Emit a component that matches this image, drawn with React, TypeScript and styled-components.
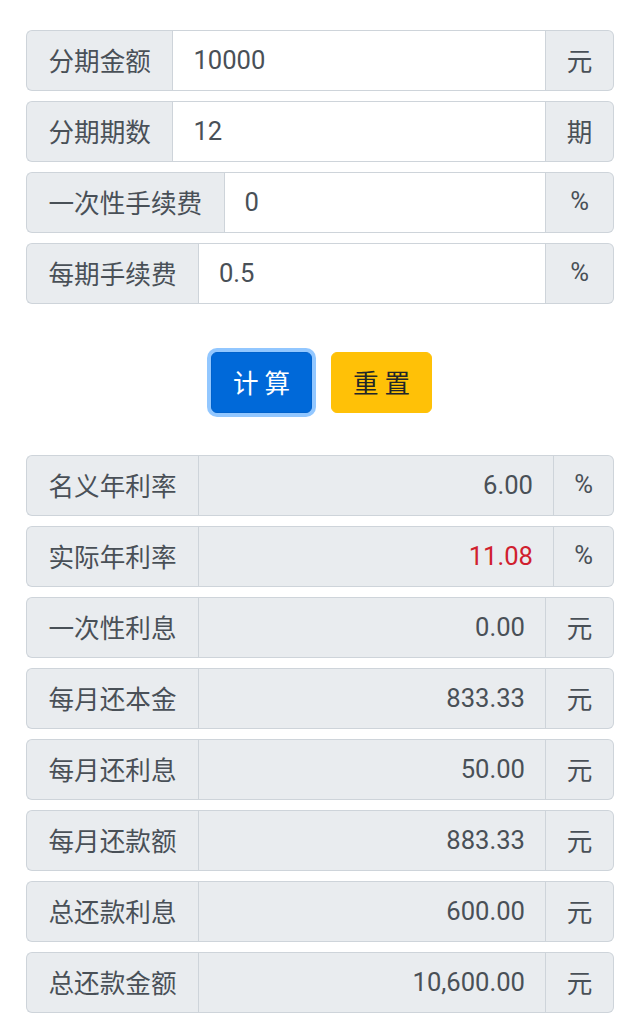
import React, { useState } from 'react';
import styled, { createGlobalStyle } from 'styled-components';

const GlobalStyle = createGlobalStyle`
  html, body {
    margin: 0;
    padding: 0;
    background: #ffffff;
  }
  body {
    font-family: Roboto, "Noto Sans CJK SC", "Noto Sans", sans-serif;
    color: #212529;
  }
  * { box-sizing: border-box; }
`;

const Page = styled.div`
  padding: 30px 26px 19px;
  display: flex;
  flex-direction: column;
`;

const Stack = styled.div`
  display: flex;
  flex-direction: column;
  gap: 10px;
`;

const Group = styled.div`
  display: flex;
  align-items: stretch;
  height: 61px;
`;

const Addon = styled.span<{ $side: 'left' | 'right'; $width?: number }>`
  display: flex;
  align-items: center;
  justify-content: center;
  padding: 0 21.5px 3px;
  ${p => (p.$width ? `width: ${p.$width}px; flex: none;` : '')}
  font-size: 25.6px;
  color: #495057;
  background: #e9ecef;
  border: 1.6px solid #ced4da;
  white-space: nowrap;
  border-radius: ${p => (p.$side === 'left' ? '6px 0 0 6px' : '0 6px 6px 0')};
  ${p => (p.$side === 'left' ? 'border-right: none;' : 'border-left: none;')}
`;

const Field = styled.input<{ $readOnly?: boolean; $danger?: boolean }>`
  flex: 1;
  min-width: 0;
  height: 100%;
  padding: 0 20px 2px;
  font-family: Roboto, "Noto Sans CJK SC", sans-serif;
  font-size: 25.6px;
  color: ${p => (p.$danger ? '#d0202e' : '#495057')};
  background: ${p => (p.$readOnly ? '#e9ecef' : '#ffffff')};
  text-align: ${p => (p.$readOnly ? 'right' : 'left')};
  border: 1.6px solid #ced4da;
  border-radius: 0;
  outline: none;
`;

const Buttons = styled.div`
  display: flex;
  justify-content: center;
  gap: 19px;
  margin: 48px 0 42px;
  padding-left: 3px;
`;

const Button = styled.button<{ $variant: 'primary' | 'warning'; $focused?: boolean }>`
  width: 101px;
  height: 61px;
  border-radius: 6px;
  font-family: "Noto Sans CJK SC", sans-serif;
  font-size: 25.6px;
  letter-spacing: 6px;
  padding: 0 0 3px 6px;
  cursor: pointer;
  border: 1.6px solid ${p => (p.$variant === 'primary' ? '#0062cc' : '#ffc107')};
  background: ${p => (p.$variant === 'primary' ? '#0069d9' : '#ffc107')};
  color: ${p => (p.$variant === 'primary' ? '#ffffff' : '#212529')};
  box-shadow: ${p => (p.$focused ? '0 0 0 4px rgba(38, 143, 255, 0.5)' : 'none')};
`;

const inputs = [
  { label: '分期金额', value: '10000', unit: '元' },
  { label: '分期期数', value: '12', unit: '期' },
  { label: '一次性手续费', value: '0', unit: '%' },
  { label: '每期手续费', value: '0.5', unit: '%' },
];

const results = [
  { label: '名义年利率', value: '6.00', unit: '%' },
  { label: '实际年利率', value: '11.08', unit: '%', danger: true },
  { label: '一次性利息', value: '0.00', unit: '元' },
  { label: '每月还本金', value: '833.33', unit: '元' },
  { label: '每月还利息', value: '50.00', unit: '元' },
  { label: '每月还款额', value: '883.33', unit: '元' },
  { label: '总还款利息', value: '600.00', unit: '元' },
  { label: '总还款金额', value: '10,600.00', unit: '元' },
];

export default function App() {
  const [values, setValues] = useState(inputs.map(i => i.value));

  return (
    <Page>
      <GlobalStyle />
      <Stack>
        {inputs.map((item, idx) => (
          <Group key={item.label}>
            <Addon $side="left">{item.label}</Addon>
            <Field
              value={values[idx]}
              onChange={e => {
                const next = [...values];
                next[idx] = e.target.value;
                setValues(next);
              }}
            />
            <Addon $side="right" $width={68}>{item.unit}</Addon>
          </Group>
        ))}
      </Stack>

      <Buttons>
        <Button $variant="primary" $focused>计算</Button>
        <Button $variant="warning" onClick={() => setValues(inputs.map(i => i.value))}>重置</Button>
      </Buttons>

      <Stack>
        {results.map(item => (
          <Group key={item.label}>
            <Addon $side="left" $width={172}>{item.label}</Addon>
            <Field $readOnly $danger={item.danger} readOnly value={item.value} />
            <Addon $side="right" $width={item.unit === '%' ? 60 : 68}>{item.unit}</Addon>
          </Group>
        ))}
      </Stack>
    </Page>
  );
}
